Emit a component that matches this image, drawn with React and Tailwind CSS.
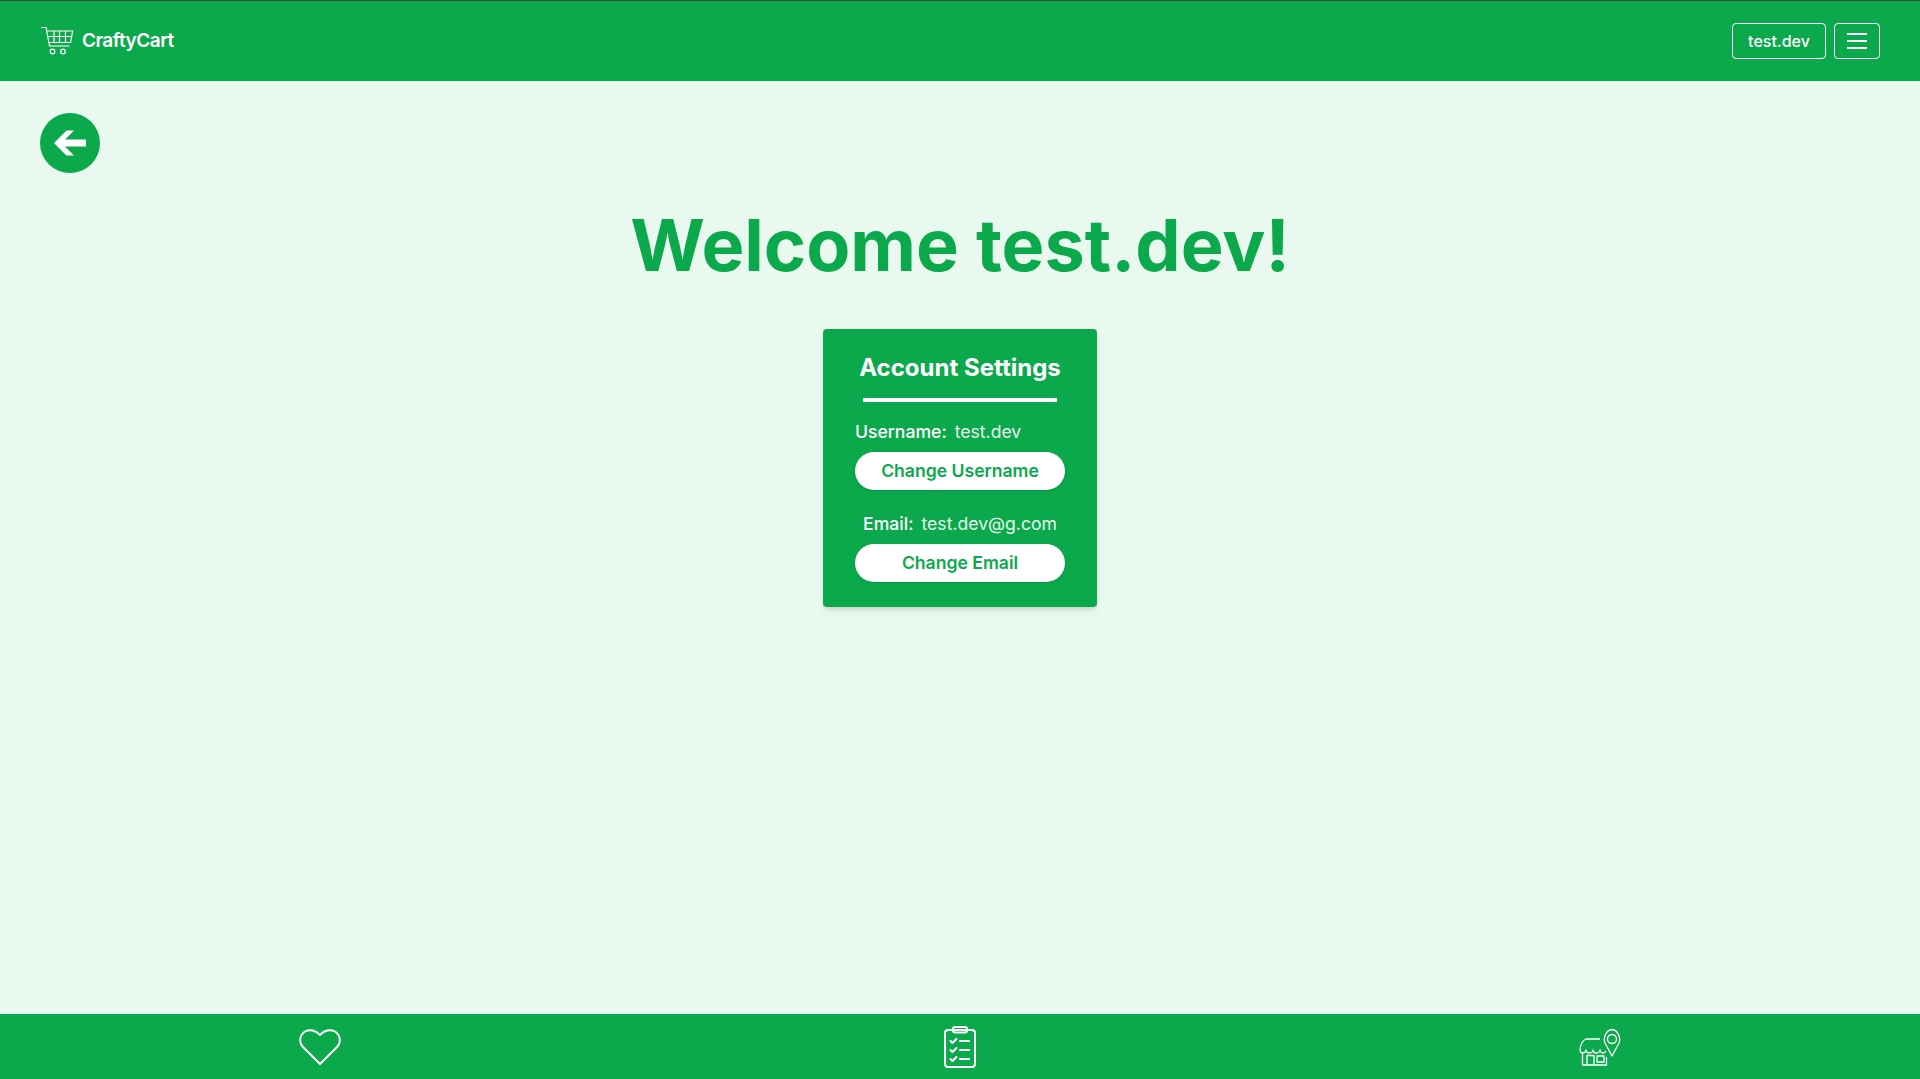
import React from 'react';

const CartIcon = () => (
  <svg width="34" height="30" viewBox="0 0 34 30" fill="none" stroke="white" strokeWidth="1.2">
    <path d="M1 1.5h5l3.5 18.5h20" />
    <path d="M6.8 5h25.8l-2 11.5H8.8" />
    <path d="M7.6 10.5h24M14 5v11.5M19.5 5v11.5M25.5 5v11.5" />
    <circle cx="12.5" cy="25.5" r="2.3" />
    <circle cx="23" cy="25.5" r="2.3" />
  </svg>
);

const ArrowIcon = () => (
  <svg width="32" height="28" viewBox="0 0 32 28" fill="white">
    <path d="M0 14 12.5 1.5h7.5L11 10.5h21v7H11l9 9h-7.500z" />
  </svg>
);

const HeartIcon = () => (
  <svg width="42" height="38" viewBox="0 0 42 38" fill="none" stroke="white" strokeWidth="2" strokeLinejoin="round">
    <path d="M21 36 3.500 18.500C-.500 14 1 6.500 6 3.500c4.500-2.500 11-1.500 15 3.500 4-5 10.500-6 15-3.500 5 3 6.500 10.500 2.500 15z" />
  </svg>
);

const ClipboardIcon = () => (
  <svg width="32" height="42" viewBox="0 0 32 42" fill="none" stroke="white" strokeWidth="2" strokeLinecap="round" strokeLinejoin="round">
    <rect x="1" y="4" width="30" height="37" rx="3" />
    <rect x="9" y="1" width="14" height="5.500" rx="2" />
    <path d="M6.500 15l2 2 4-4M6.500 24l2 2 4-4M6.500 33l2 2 4-4" />
    <path d="M16 15h9M16 24h9M16 33h9" />
  </svg>
);

const StoreIcon = () => (
  <svg width="42" height="38" viewBox="0 0 42 38" fill="none" stroke="white" strokeWidth="1.300" strokeLinejoin="round">
    <path d="M21 11H7c-3 1-6 6-6 11 0 2 1.500 3 3 3s3-1.500 3-3c0 2 1.500 3 3.500 3s3.500-1.500 3.500-3c0 2 1.500 3 3.500 3s3.500-1.500 3.500-3c0 1.500 1.500 3 3 3s2.500-1 3-2" />
    <path d="M3.500 25v12h24v-8" />
    <path d="M8 37V27.500h7V37M18 28h7v6h-7z" />
    <path d="M33 28 26 15c-2-5 1-13 7-13.500 6 .5 9 8.500 7 13.500z" />
    <circle cx="33" cy="11" r="4.500" />
  </svg>
);

const App = () => {
  return (
    <div className="min-h-[1079px] flex flex-col bg-[#e9f9ef] font-['Inter',sans-serif]">
      {/* Navbar */}
      <nav className="h-[81px] border-t border-[#3a4a40] bg-[#0ca84c] px-10 flex items-center justify-between">
        <div className="flex items-center gap-2">
          <CartIcon />
          <span className="text-white font-semibold text-[19px] tracking-[-0.5px]">CraftyCart</span>
        </div>
        <div className="flex items-center gap-2">
          <button className="w-[94px] h-9 border border-white rounded text-white text-[16px] font-medium">test.dev</button>
          <button className="w-[46px] h-9 border border-white rounded flex flex-col items-center justify-center gap-[5px]">
            <span className="block w-5 h-[2px] bg-white"></span>
            <span className="block w-5 h-[2px] bg-white"></span>
            <span className="block w-5 h-[2px] bg-white"></span>
          </button>
        </div>
      </nav>

      {/* Content */}
      <main className="flex-1 relative flex flex-col items-center">
        <button className="absolute left-10 top-8 w-[60px] h-[60px] rounded-full bg-[#0ca84c] flex items-center justify-center">
          <ArrowIcon />
        </button>
        <h1 className="mt-[115px] text-[72px] leading-[98px] font-bold text-[#0ca84c]">Welcome test.dev!</h1>
        <div className="mt-[35px] w-[274px] h-[278px] bg-[#0ca84c] rounded shadow-md px-8 pt-[22px] flex flex-col text-white">
          <h2 className="text-[24px] leading-[34px] font-bold text-center whitespace-nowrap">Account Settings</h2>
          <div className="mt-[13px] mx-2 h-1 bg-white"></div>
          <div className="mt-4 flex justify-start gap-2 text-[17.6px] leading-[28px] whitespace-nowrap">
            <span className="font-medium">Username:</span>
            <span className="text-[#e6f6ec]">test.dev</span>
          </div>
          <button className="mt-[6px] h-[38px] rounded-full bg-white text-[#0ca84c] font-semibold text-[17.6px] shadow-sm">Change Username</button>
          <div className="mt-5 flex justify-center gap-2 text-[17.6px] leading-[28px] whitespace-nowrap">
            <span className="font-medium">Email:</span>
            <span className="text-[#e6f6ec]">test.dev@g.com</span>
          </div>
          <button className="mt-[6px] h-[38px] rounded-full bg-white text-[#0ca84c] font-semibold text-[17.6px] shadow-sm">Change Email</button>
        </div>
      </main>

      {/* Bottom bar */}
      <footer className="h-[65px] bg-[#0ca84c] grid grid-cols-3">
        <div className="flex items-center justify-center"><HeartIcon /></div>
        <div className="flex items-center justify-center"><ClipboardIcon /></div>
        <div className="flex items-center justify-center"><StoreIcon /></div>
      </footer>
    </div>
  );
};

export default App;
